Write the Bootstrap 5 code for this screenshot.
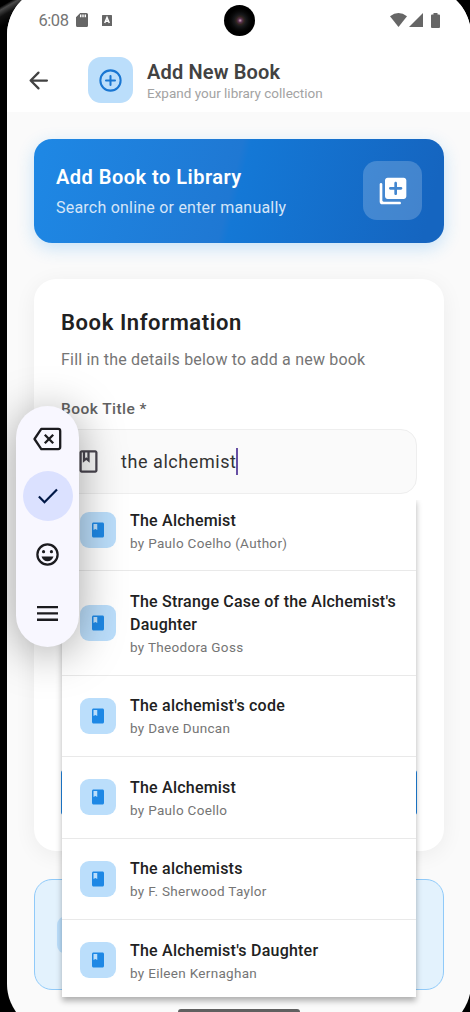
<!DOCTYPE html>
<html lang="en">
<head>
<meta charset="utf-8">
<meta name="viewport" content="width=device-width, initial-scale=1">
<title>Add New Book</title>
<link href="https://cdn.jsdelivr.net/npm/bootstrap@5.3.0/dist/css/bootstrap.min.css" rel="stylesheet">
<style>
body{font-family:Roboto,"Liberation Sans",sans-serif;background:linear-gradient(150deg,#000 0,#000 6px,#4a4a4a 9px,#111 15px,#000 24px);height:1012px;overflow:hidden;color:#212121}
.phone{height:1012px;padding-left:7px;overflow:hidden}
.screen{width:464px;height:1045px;margin-top:-13px;padding-top:13px;border-radius:48px;background:#fafafa;overflow:hidden}
.topbar{height:112px;background:#fff}
.statusbar{height:40px;padding:0 31.5px 0 31.5px;color:#666}
.clock{font-size:16.5px;letter-spacing:-.45px;color:#757575;width:30px;white-space:nowrap;margin-right:7px;line-height:20px;padding-top:1px}
.lens{left:216.5px;top:17.5px;width:31px;height:31px;background:radial-gradient(circle at 52% 50%,#c9a0b8 0,#5a3350 2px,#30251f 4px,#17181b 6px,#090909 9px,#000 12px)}
.appbar{height:72px;padding:8px 17px 0 17.5px}
.addtile{width:45.5px;height:45.5px;border-radius:13px;background:#bbdefb;margin-left:36px;margin-right:14px}
.t1{font-size:20px;line-height:24px;font-weight:600;color:#424242;letter-spacing:.15px}
.t2{font-size:13.5px;line-height:18px;color:#a3a3a3;letter-spacing:0}
.hero{margin:27px 27px 0;height:103.5px;border-radius:18px;padding:0 22px;background:linear-gradient(104deg,#1e88e5 0,#1f78d3 48%,#1478d6 50%,#1565c0 95%);box-shadow:0 5px 17px rgba(33,150,243,.24)}
.h1x{font-size:20px;line-height:25px;font-weight:600;letter-spacing:.48px}
.h2x{font-size:16px;line-height:22px;letter-spacing:.22px;color:#d5e5f8;margin-top:7px}
.herotile{width:59px;height:59px;border-radius:14px;background:rgba(255,255,255,.2)}
.panel{margin:36.5px 27px 0;height:572px;border-radius:22px;background:#fff;padding:30px 27px 0;box-shadow:0 4px 22px rgba(0,0,0,.06)}
.p1{font-size:22px;line-height:28px;font-weight:600;letter-spacing:.59px}
.p2{font-size:16px;line-height:22px;color:#757575;letter-spacing:.2px;margin-top:11.5px}
.p3{font-size:15.5px;line-height:20px;font-weight:500;color:#616161;letter-spacing:.44px;margin-top:28.5px}
.entry{margin:10px 0 0 0;height:65px;border:1px solid #eee;border-radius:16px;background:#fafafa;padding-left:13px}
.typed{font-size:18px;line-height:27px;letter-spacing:.56px;margin-left:19px;color:#333;margin-top:-1px}
.caret{width:2px;height:27px;background:#6750a4}
.save{height:45px;margin-top:276px;background:#1e82dd;border-radius:3px;margin-left:-.4px;margin-right:-.4px}
.tip{margin:28px 27px 0;height:111px;border:1.3px solid #90caf9;border-radius:18px;background:#e3f2fd;padding-left:22px}
.tiptile{width:45px;height:38px;border-radius:9px;background:#bbdefb}
.options{left:55px;top:511px;width:354px;height:499px;background:#fff;box-shadow:0 4px 6px rgba(0,0,0,.3);clip-path:inset(2px -12px -12px -12px)}
.optlist{margin-top:-8px}
.opt{height:81.45px;border-bottom:1px solid #e9e9e9;padding:0 17px 0 18px}
.opt.two{height:104.2px}
.booktile{width:36px;height:36px;border-radius:9px;background:#bbdefb;margin-right:14px}
.o1{font-size:16px;line-height:22.8px;font-weight:500;letter-spacing:.22px;white-space:nowrap;padding-top:1px}
.o2{font-size:13.5px;line-height:18px;color:#757575;letter-spacing:.31px;margin-top:1.5px}
.keys{left:9px;top:419px;width:63px;height:240.5px;border-radius:31.5px;background:#f8f7ff;box-shadow:0 6px 46px rgba(0,0,0,.36);color:#1b1b1f}
.okkey{width:50px;height:50px;background:#dbe1ff;color:#001847}
.homebar{left:171px;top:1022px;width:122px;height:6px;background:#606060}
svg{display:block;flex:none;fill:currentColor}
</style>
</head>
<body>
<svg width="0" height="0" class="position-absolute"><symbol id="book" viewBox="0 0 24 24"><path d="M18 2H6c-1.100 0-2 .9-2 2v16c0 1.100.9 2 2 2h12c1.100 0 2-.9 2-2V4c0-1.100-.9-2-2-2z"/><path fill="#bbdefb" d="M6 4h5v8l-2.500-1.500L6 12V4z"/></symbol></svg>
<div class="phone">
<main class="screen position-relative">
  <header class="topbar">
    <div class="statusbar d-flex align-items-center justify-content-between">
      <div class="d-flex align-items-center"><span class="clock">6:08</span>
        <svg width="12" height="14" viewBox="0 0 12 14"><path fill-rule="evenodd" d="M4.200 0H10.500q1.500 0 1.500 1.500v11q0 1.500-1.500 1.500h-9Q0 14 0 12.500V4.300zM4 1.500v2.700h1.400V1.500zm2.300 0v2.700h1.400V1.500zm2.300 0v2.700H10V1.500z"/></svg>
        <svg style="margin-left:14px" width="10" height="11" viewBox="0 0 10 11"><rect width="10" height="11" rx=".6"/><path d="M2.700 8 5 2.500 7.300 8M3.700 6.300h2.600" fill="none" stroke="#fff" stroke-width="1.500"/></svg>
      </div>
      <div class="d-flex align-items-center">
        <svg width="17" height="14" viewBox="0 0 17 14"><path d="M0 3.200Q8.500-3 17 3.200L8.500 14z"/></svg>
        <svg style="margin-left:2px" width="14" height="14" viewBox="0 0 14 14"><path d="M14 0v14H0z"/></svg>
        <svg style="margin-left:8px" width="9" height="15" viewBox="0 0 9 15"><path d="M2.500 0h4v1.400H8q1 0 1 1V14q0 1-1 1H1q-1 0-1-1V2.400q0-1 1-1h1.500z"/></svg>
      </div>
    </div>
    <div class="appbar d-flex align-items-center">
      <svg width="27" height="27" viewBox="0 0 24 24" style="color:#424242"><path d="M19.500 12H5m7-7-7 7 7 7" fill="none" stroke="currentColor" stroke-width="2" stroke-linecap="round" stroke-linejoin="round"/></svg>
      <div class="addtile d-flex align-items-center justify-content-center" style="color:#1976d2"><svg width="27" height="27" viewBox="0 0 24 24"><g fill="none" stroke="currentColor" stroke-width="1.800" stroke-linecap="round"><circle cx="12" cy="12" r="9"/><path d="M12 8v8M8 12h8"/></g></svg></div>
      <div style="margin-top:2px"><div class="t1">Add New Book</div><div class="t2">Expand your library collection</div></div>
    </div>
  </header>
  <section class="hero d-flex align-items-center justify-content-between text-white">
    <div style="padding-top:3px"><div class="h1x">Add Book to Library</div><div class="h2x">Search online or enter manually</div></div>
    <div class="herotile d-flex align-items-center justify-content-center"><svg width="32" height="32" viewBox="0 0 24 24"><path d="M3 6c-.55 0-1 .45-1 1v13c0 1.100.9 2 2 2h13c.55 0 1-.45 1-1s-.45-1-1-1H5c-.55 0-1-.45-1-1V7c0-.55-.45-1-1-1zm17-4H8c-1.100 0-2 .9-2 2v12c0 1.100.9 2 2 2h12c1.100 0 2-.9 2-2V4c0-1.100-.9-2-2-2zm-2 9h-3v3c0 .55-.45 1-1 1s-1-.45-1-1v-3h-3c-.55 0-1-.45-1-1s.45-1 1-1h3V6c0-.55.45-1 1-1s1 .45 1 1v3h3c.55 0 1 .45 1 1s-.45 1-1 1z"/></svg></div>
  </section>
  <section class="panel">
    <div class="p1">Book Information</div>
    <div class="p2">Fill in the details below to add a new book</div>
    <div class="p3">Book Title *</div>
    <div class="entry d-flex align-items-center">
      <svg width="27" height="27" viewBox="0 0 24 24" style="color:#49454f"><path d="M18 2H6c-1.100 0-2 .9-2 2v16c0 1.100.9 2 2 2h12c1.100 0 2-.9 2-2V4c0-1.100-.9-2-2-2zM9 4h2v5l-1-.75L9 9V4zm9 16H6V4h1v9l3-2.250L13 13V4h5v16z"/></svg>
      <span class="typed">the alchemist</span><span class="caret"></span>
    </div>
    <div class="save"></div>
  </section>
  <section class="tip d-flex align-items-center"><div class="tiptile"></div></section>

  <div class="options position-absolute"><div class="h-100 overflow-hidden"><div class="optlist">
    <div class="opt d-flex align-items-center"><div class="booktile d-flex align-items-center justify-content-center"><svg width="18" height="18" color="#1e88e5"><use href="#book"/></svg></div><div><div class="o1">The Alchemist</div><div class="o2">by Paulo Coelho (Author)</div></div></div>
    <div class="opt two d-flex align-items-center"><div class="booktile d-flex align-items-center justify-content-center"><svg width="18" height="18" color="#1e88e5"><use href="#book"/></svg></div><div><div class="o1">The Strange Case of the Alchemist's<br>Daughter</div><div class="o2">by Theodora Goss</div></div></div>
    <div class="opt d-flex align-items-center"><div class="booktile d-flex align-items-center justify-content-center"><svg width="18" height="18" color="#1e88e5"><use href="#book"/></svg></div><div><div class="o1">The alchemist's code</div><div class="o2">by Dave Duncan</div></div></div>
    <div class="opt d-flex align-items-center"><div class="booktile d-flex align-items-center justify-content-center"><svg width="18" height="18" color="#1e88e5"><use href="#book"/></svg></div><div><div class="o1">The Alchemist</div><div class="o2">by Paulo Coello</div></div></div>
    <div class="opt d-flex align-items-center"><div class="booktile d-flex align-items-center justify-content-center"><svg width="18" height="18" color="#1e88e5"><use href="#book"/></svg></div><div><div class="o1">The alchemists</div><div class="o2">by F. Sherwood Taylor</div></div></div>
    <div class="opt d-flex align-items-center"><div class="booktile d-flex align-items-center justify-content-center"><svg width="18" height="18" color="#1e88e5"><use href="#book"/></svg></div><div><div class="o1">The Alchemist's Daughter</div><div class="o2">by Eileen Kernaghan</div></div></div>
  </div></div></div>

  <div class="keys position-absolute d-flex flex-column align-items-center">
    <svg style="margin-top:21px" width="29" height="24" viewBox="0 0 29 24"><g fill="none" stroke="currentColor" stroke-width="2.300" stroke-linejoin="round"><path d="M8.300 1.900H25.200q2 0 2 2v16.200q0 2-2 2H8.300L1.500 12z"/><path d="m11.800 7.700 8.400 8.600m0-8.600-8.400 8.600"/></g></svg>
    <div class="okkey rounded-circle d-flex align-items-center justify-content-center" style="margin-top:20px"><svg width="20" height="16" viewBox="0 0 20 16"><path d="m.9 8.500 5.600 5.700L19 1.500" fill="none" stroke="currentColor" stroke-width="2.200"/></svg></div>
    <svg style="margin-top:20px" width="27" height="27" viewBox="0 0 24 24"><circle cx="12" cy="12" r="9" fill="none" stroke="currentColor" stroke-width="2"/><circle cx="8.500" cy="9.500" r="1.400"/><circle cx="15.500" cy="9.500" r="1.400"/><path d="M6.700 13.700h10.600C16.500 16.200 14.500 18 12 18s-4.500-1.800-5.300-4.300z"/></svg>
    <svg style="margin-top:38px" width="21" height="15" viewBox="0 0 21 15"><path d="M0 0h21v2.300H0zm0 6.300h21v2.300H0zm0 6.300h21v2.300H0z"/></svg>
  </div>
  <div class="lens position-absolute rounded-circle"></div>
  <div class="homebar position-absolute rounded-pill"></div>
</main>
</div>
<script src="https://cdn.jsdelivr.net/npm/bootstrap@5.3.0/dist/js/bootstrap.bundle.min.js"></script>
</body>
</html>
